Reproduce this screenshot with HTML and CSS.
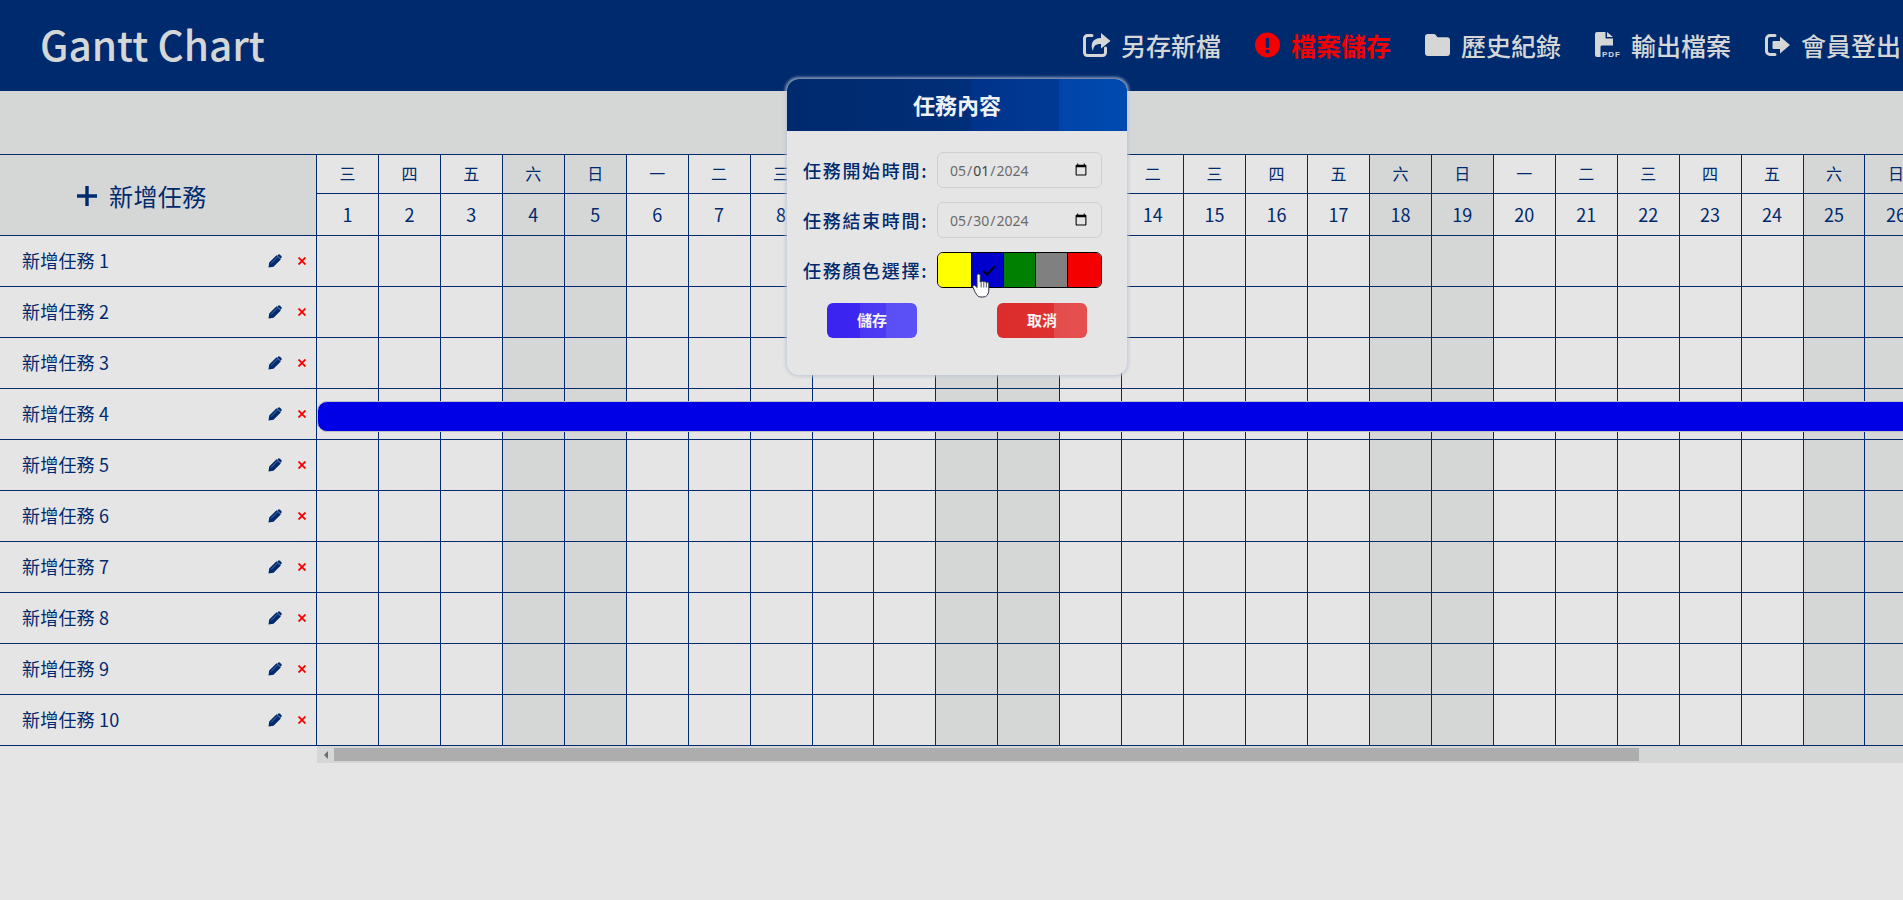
FILE: index.html
```html
<!DOCTYPE html>
<html lang="zh-Hant">
<head>
<meta charset="utf-8">
<title>Gantt Chart</title>
<link rel="stylesheet" href="styles.css">
</head>
<body>
<header class="topbar">
  <h1 class="brand">Gantt Chart</h1>
  <nav class="nav">
    <a class="nav-item"><svg class="nav-icon" viewBox="0 0 28 26"><path class="ico-line" d="M9 3.5H4.5a3 3 0 0 0-3 3v14a3 3 0 0 0 3 3h15a3 3 0 0 0 3-3V16"/><path class="ico-fill" d="M18 1l9.5 8L18 16.500V12c-5 0-7.500 1-8 7-3-6-1-13 8-13z"/></svg><span>另存新檔</span></a>
    <a class="nav-item nav-alert"><svg class="nav-icon" viewBox="-2 0 28 26"><circle cx="12.500" cy="13" r="12.500" fill="#f40000"/><rect x="10.800" y="5.500" width="3.400" height="10.500" rx="1.500" fill="#002a6e"/><circle cx="12.500" cy="19.500" r="2" fill="#002a6e"/></svg><span>檔案儲存</span></a>
    <a class="nav-item"><svg class="nav-icon" viewBox="-2 0 28 26"><path class="ico-fill" d="M3 2h6a2 2 0 0 1 1.600.8L12.500 5.200H22a3 3 0 0 1 3 3V21a3 3 0 0 1-3 3H3a3 3 0 0 1-3-3V5a3 3 0 0 1 3-3z"/></svg><span>歷史紀錄</span></a>
    <a class="nav-item"><svg class="nav-icon" viewBox="-2 0 28 26"><path class="ico-fill" d="M2 0h8.500v6.500H18v7H7a1.500 1.500 0 0 0-1.500 1.500v10H2a2 2 0 0 1-2-2V2a2 2 0 0 1 2-2zM12 0l6 5h-6z"/><text class="pdf-text" x="7" y="24.500" textLength="18">PDF</text></svg><span>輸出檔案</span></a>
    <a class="nav-item"><svg class="nav-icon" viewBox="-2 0 28 26"><path class="ico-line" d="M10 3.500H5A3.500 3.500 0 0 0 1.500 7v12A3.500 3.500 0 0 0 5 22.500h5"/><path class="ico-fill" d="M8.500 9H15V4.500L25 13l-10 8.500V17H8.500a1 1 0 0 1-1-1v-6a1 1 0 0 1 1-1z"/></svg><span>會員登出</span></a>
  </nav>
</header>

<div class="band"></div>

<main class="gantt">
  <div class="row row-head">
    <div class="add-task"><svg class="plus" viewBox="0 0 20 20"><path d="M10 0v20M0 10h20"/></svg><span>新增任務</span></div>
    <div class="day"><div class="wd">三</div><div class="dn">1</div></div>
    <div class="day"><div class="wd">四</div><div class="dn">2</div></div>
    <div class="day"><div class="wd">五</div><div class="dn">3</div></div>
    <div class="day off"><div class="wd">六</div><div class="dn">4</div></div>
    <div class="day off"><div class="wd">日</div><div class="dn">5</div></div>
    <div class="day"><div class="wd">一</div><div class="dn">6</div></div>
    <div class="day"><div class="wd">二</div><div class="dn">7</div></div>
    <div class="day"><div class="wd">三</div><div class="dn">8</div></div>
    <div class="day"><div class="wd">四</div><div class="dn">9</div></div>
    <div class="day"><div class="wd">五</div><div class="dn">10</div></div>
    <div class="day off"><div class="wd">六</div><div class="dn">11</div></div>
    <div class="day off"><div class="wd">日</div><div class="dn">12</div></div>
    <div class="day"><div class="wd">一</div><div class="dn">13</div></div>
    <div class="day"><div class="wd">二</div><div class="dn">14</div></div>
    <div class="day"><div class="wd">三</div><div class="dn">15</div></div>
    <div class="day"><div class="wd">四</div><div class="dn">16</div></div>
    <div class="day"><div class="wd">五</div><div class="dn">17</div></div>
    <div class="day off"><div class="wd">六</div><div class="dn">18</div></div>
    <div class="day off"><div class="wd">日</div><div class="dn">19</div></div>
    <div class="day"><div class="wd">一</div><div class="dn">20</div></div>
    <div class="day"><div class="wd">二</div><div class="dn">21</div></div>
    <div class="day"><div class="wd">三</div><div class="dn">22</div></div>
    <div class="day"><div class="wd">四</div><div class="dn">23</div></div>
    <div class="day"><div class="wd">五</div><div class="dn">24</div></div>
    <div class="day off"><div class="wd">六</div><div class="dn">25</div></div>
    <div class="day off"><div class="wd">日</div><div class="dn">26</div></div>
  </div>

  <div class="row"><div class="name"><span>新增任務 1</span><svg class="pencil" viewBox="0 0 14 14"><path d="M.5 13.500l.7-5 7.300-7.300 4.300 4.300-7.300 7.300zM10 .7a1.500 1.500 0 0 1 2 0L13.300 2a1.500 1.500 0 0 1 0 2l-.7.7L9.300 1.400z"/><path class="pencil-line" d="M3 9.500L9.500 3"/></svg><svg class="cross" viewBox="0 0 8 8"><path d="M.5.500l7 7M7.500.500l-7 7"/></svg></div><i class="c"></i><i class="c"></i><i class="c"></i><i class="c o"></i><i class="c o"></i><i class="c"></i><i class="c"></i><i class="c"></i><i class="c"></i><i class="c"></i><i class="c o"></i><i class="c o"></i><i class="c"></i><i class="c"></i><i class="c"></i><i class="c"></i><i class="c"></i><i class="c o"></i><i class="c o"></i><i class="c"></i><i class="c"></i><i class="c"></i><i class="c"></i><i class="c"></i><i class="c o"></i><i class="c o"></i></div>
  <div class="row"><div class="name"><span>新增任務 2</span><svg class="pencil" viewBox="0 0 14 14"><path d="M.5 13.500l.7-5 7.300-7.300 4.300 4.300-7.300 7.300zM10 .7a1.500 1.500 0 0 1 2 0L13.300 2a1.500 1.500 0 0 1 0 2l-.7.7L9.300 1.400z"/><path class="pencil-line" d="M3 9.500L9.500 3"/></svg><svg class="cross" viewBox="0 0 8 8"><path d="M.5.500l7 7M7.500.500l-7 7"/></svg></div><i class="c"></i><i class="c"></i><i class="c"></i><i class="c o"></i><i class="c o"></i><i class="c"></i><i class="c"></i><i class="c"></i><i class="c"></i><i class="c"></i><i class="c o"></i><i class="c o"></i><i class="c"></i><i class="c"></i><i class="c"></i><i class="c"></i><i class="c"></i><i class="c o"></i><i class="c o"></i><i class="c"></i><i class="c"></i><i class="c"></i><i class="c"></i><i class="c"></i><i class="c o"></i><i class="c o"></i></div>
  <div class="row"><div class="name"><span>新增任務 3</span><svg class="pencil" viewBox="0 0 14 14"><path d="M.5 13.500l.7-5 7.300-7.300 4.300 4.300-7.300 7.300zM10 .7a1.500 1.500 0 0 1 2 0L13.300 2a1.500 1.500 0 0 1 0 2l-.7.7L9.300 1.400z"/><path class="pencil-line" d="M3 9.500L9.500 3"/></svg><svg class="cross" viewBox="0 0 8 8"><path d="M.5.500l7 7M7.500.500l-7 7"/></svg></div><i class="c"></i><i class="c"></i><i class="c"></i><i class="c o"></i><i class="c o"></i><i class="c"></i><i class="c"></i><i class="c"></i><i class="c"></i><i class="c"></i><i class="c o"></i><i class="c o"></i><i class="c"></i><i class="c"></i><i class="c"></i><i class="c"></i><i class="c"></i><i class="c o"></i><i class="c o"></i><i class="c"></i><i class="c"></i><i class="c"></i><i class="c"></i><i class="c"></i><i class="c o"></i><i class="c o"></i></div>
  <div class="row row-task"><div class="name"><span>新增任務 4</span><svg class="pencil" viewBox="0 0 14 14"><path d="M.5 13.500l.7-5 7.300-7.300 4.300 4.300-7.300 7.300zM10 .7a1.500 1.500 0 0 1 2 0L13.300 2a1.500 1.500 0 0 1 0 2l-.7.7L9.300 1.400z"/><path class="pencil-line" d="M3 9.500L9.500 3"/></svg><svg class="cross" viewBox="0 0 8 8"><path d="M.5.500l7 7M7.500.500l-7 7"/></svg></div><i class="c"></i><i class="c"></i><i class="c"></i><i class="c o"></i><i class="c o"></i><i class="c"></i><i class="c"></i><i class="c"></i><i class="c"></i><i class="c"></i><i class="c o"></i><i class="c o"></i><i class="c"></i><i class="c"></i><i class="c"></i><i class="c"></i><i class="c"></i><i class="c o"></i><i class="c o"></i><i class="c"></i><i class="c"></i><i class="c"></i><i class="c"></i><i class="c"></i><i class="c o"></i><i class="c o"></i><div class="task-bar"></div></div>
  <div class="row"><div class="name"><span>新增任務 5</span><svg class="pencil" viewBox="0 0 14 14"><path d="M.5 13.500l.7-5 7.300-7.300 4.300 4.300-7.300 7.300zM10 .7a1.500 1.500 0 0 1 2 0L13.300 2a1.500 1.500 0 0 1 0 2l-.7.7L9.300 1.400z"/><path class="pencil-line" d="M3 9.500L9.500 3"/></svg><svg class="cross" viewBox="0 0 8 8"><path d="M.5.500l7 7M7.500.500l-7 7"/></svg></div><i class="c"></i><i class="c"></i><i class="c"></i><i class="c o"></i><i class="c o"></i><i class="c"></i><i class="c"></i><i class="c"></i><i class="c"></i><i class="c"></i><i class="c o"></i><i class="c o"></i><i class="c"></i><i class="c"></i><i class="c"></i><i class="c"></i><i class="c"></i><i class="c o"></i><i class="c o"></i><i class="c"></i><i class="c"></i><i class="c"></i><i class="c"></i><i class="c"></i><i class="c o"></i><i class="c o"></i></div>
  <div class="row"><div class="name"><span>新增任務 6</span><svg class="pencil" viewBox="0 0 14 14"><path d="M.5 13.500l.7-5 7.300-7.300 4.300 4.300-7.300 7.300zM10 .7a1.500 1.500 0 0 1 2 0L13.300 2a1.500 1.500 0 0 1 0 2l-.7.7L9.300 1.400z"/><path class="pencil-line" d="M3 9.500L9.500 3"/></svg><svg class="cross" viewBox="0 0 8 8"><path d="M.5.500l7 7M7.500.500l-7 7"/></svg></div><i class="c"></i><i class="c"></i><i class="c"></i><i class="c o"></i><i class="c o"></i><i class="c"></i><i class="c"></i><i class="c"></i><i class="c"></i><i class="c"></i><i class="c o"></i><i class="c o"></i><i class="c"></i><i class="c"></i><i class="c"></i><i class="c"></i><i class="c"></i><i class="c o"></i><i class="c o"></i><i class="c"></i><i class="c"></i><i class="c"></i><i class="c"></i><i class="c"></i><i class="c o"></i><i class="c o"></i></div>
  <div class="row"><div class="name"><span>新增任務 7</span><svg class="pencil" viewBox="0 0 14 14"><path d="M.5 13.500l.7-5 7.300-7.300 4.300 4.300-7.300 7.300zM10 .7a1.500 1.500 0 0 1 2 0L13.300 2a1.500 1.500 0 0 1 0 2l-.7.7L9.300 1.400z"/><path class="pencil-line" d="M3 9.500L9.500 3"/></svg><svg class="cross" viewBox="0 0 8 8"><path d="M.5.500l7 7M7.500.500l-7 7"/></svg></div><i class="c"></i><i class="c"></i><i class="c"></i><i class="c o"></i><i class="c o"></i><i class="c"></i><i class="c"></i><i class="c"></i><i class="c"></i><i class="c"></i><i class="c o"></i><i class="c o"></i><i class="c"></i><i class="c"></i><i class="c"></i><i class="c"></i><i class="c"></i><i class="c o"></i><i class="c o"></i><i class="c"></i><i class="c"></i><i class="c"></i><i class="c"></i><i class="c"></i><i class="c o"></i><i class="c o"></i></div>
  <div class="row"><div class="name"><span>新增任務 8</span><svg class="pencil" viewBox="0 0 14 14"><path d="M.5 13.500l.7-5 7.300-7.300 4.300 4.300-7.300 7.300zM10 .7a1.500 1.500 0 0 1 2 0L13.300 2a1.500 1.500 0 0 1 0 2l-.7.7L9.300 1.400z"/><path class="pencil-line" d="M3 9.500L9.500 3"/></svg><svg class="cross" viewBox="0 0 8 8"><path d="M.5.500l7 7M7.500.500l-7 7"/></svg></div><i class="c"></i><i class="c"></i><i class="c"></i><i class="c o"></i><i class="c o"></i><i class="c"></i><i class="c"></i><i class="c"></i><i class="c"></i><i class="c"></i><i class="c o"></i><i class="c o"></i><i class="c"></i><i class="c"></i><i class="c"></i><i class="c"></i><i class="c"></i><i class="c o"></i><i class="c o"></i><i class="c"></i><i class="c"></i><i class="c"></i><i class="c"></i><i class="c"></i><i class="c o"></i><i class="c o"></i></div>
  <div class="row"><div class="name"><span>新增任務 9</span><svg class="pencil" viewBox="0 0 14 14"><path d="M.5 13.500l.7-5 7.300-7.300 4.300 4.300-7.300 7.300zM10 .7a1.500 1.500 0 0 1 2 0L13.300 2a1.500 1.500 0 0 1 0 2l-.7.7L9.300 1.400z"/><path class="pencil-line" d="M3 9.500L9.500 3"/></svg><svg class="cross" viewBox="0 0 8 8"><path d="M.5.500l7 7M7.500.500l-7 7"/></svg></div><i class="c"></i><i class="c"></i><i class="c"></i><i class="c o"></i><i class="c o"></i><i class="c"></i><i class="c"></i><i class="c"></i><i class="c"></i><i class="c"></i><i class="c o"></i><i class="c o"></i><i class="c"></i><i class="c"></i><i class="c"></i><i class="c"></i><i class="c"></i><i class="c o"></i><i class="c o"></i><i class="c"></i><i class="c"></i><i class="c"></i><i class="c"></i><i class="c"></i><i class="c o"></i><i class="c o"></i></div>
  <div class="row"><div class="name"><span>新增任務 10</span><svg class="pencil" viewBox="0 0 14 14"><path d="M.5 13.500l.7-5 7.300-7.300 4.300 4.300-7.300 7.300zM10 .7a1.500 1.500 0 0 1 2 0L13.300 2a1.500 1.500 0 0 1 0 2l-.7.7L9.300 1.400z"/><path class="pencil-line" d="M3 9.500L9.500 3"/></svg><svg class="cross" viewBox="0 0 8 8"><path d="M.5.500l7 7M7.500.500l-7 7"/></svg></div><i class="c"></i><i class="c"></i><i class="c"></i><i class="c o"></i><i class="c o"></i><i class="c"></i><i class="c"></i><i class="c"></i><i class="c"></i><i class="c"></i><i class="c o"></i><i class="c o"></i><i class="c"></i><i class="c"></i><i class="c"></i><i class="c"></i><i class="c"></i><i class="c o"></i><i class="c o"></i><i class="c"></i><i class="c"></i><i class="c"></i><i class="c"></i><i class="c"></i><i class="c o"></i><i class="c o"></i></div>

  <div class="scrollbar">
    <div class="sb-arrow"></div>
    <div class="sb-thumb"></div>
  </div>
</main>

<section class="modal">
  <h2 class="modal-title">任務內容</h2>
  <form class="modal-form">
    <div class="field"><label class="field-label">任務開始時間:</label><input class="date-input date-day" type="date" value="2024-05-01"></div>
    <div class="field"><label class="field-label">任務結束時間:</label><input class="date-input" type="date" value="2024-05-30"></div>
    <div class="field"><label class="field-label">任務顏色選擇:</label>
      <div class="palette">
        <div class="swatch sw-yellow"></div>
        <div class="swatch sw-blue"><svg class="check" viewBox="0 0 14 11"><path d="M1 6l4 3.500L13 1"/></svg></div>
        <div class="swatch sw-green"></div>
        <div class="swatch sw-gray"></div>
        <div class="swatch sw-red"></div>
        <svg class="hand" viewBox="0 0 18 25"><path d="M5 2.500a1.600 1.600 0 0 1 3.200 0V9l1 .1V9a1.400 1.400 0 0 1 2.600.3 1.400 1.400 0 0 1 2.600.6 1.300 1.300 0 0 1 2.400.8V17c0 4-2 7-6 7h-2c-3 0-4-2-5.500-4.500L1 14.500c-.8-1.600 1-3 2.300-1.800L5 14.500z"/><path d="M9.200 9.500v5M11.800 9.500v5M14.400 10v4.500"/></svg>
      </div>
    </div>
    <div class="actions">
      <button class="btn btn-save" type="button">儲存</button>
      <button class="btn btn-cancel" type="button">取消</button>
    </div>
  </form>
</section>
</body>
</html>
```

FILE: styles.css
```css
* { box-sizing: border-box; }

html, body {
  margin: 0;
  height: 100%;
  overflow: hidden;
}

body {
  background: #e5e5e5;
  color: #002a6e;
  font-family: "Noto Sans CJK TC", "Noto Sans", sans-serif;
}

/* top bar */
.topbar {
  height: 91px;
  background: #002a6e;
  display: flex;
  align-items: center;
  padding: 0 2px 0 40px;
}

.brand {
  margin: 0 0 2px;
  font-size: 40.6px;
  line-height: 1;
  font-weight: 500;
  color: #d5d7d7;
}

.nav {
  margin-left: auto;
  display: flex;
  gap: 32px;
  margin-top: -2px;
}

.nav-item {
  display: flex;
  align-items: center;
  gap: 10px;
  font-size: 25px;
  line-height: 30px;
  font-weight: 500;
  color: #d5d7d7;
}

.nav-alert {
  color: #f40000;
  font-weight: 700;
}

.nav-icon {
  width: 28px;
  height: 26px;
  flex: none;
}

.ico-line {
  fill: none;
  stroke: #d5d7d7;
  stroke-width: 3;
  stroke-linecap: round;
}

.ico-fill { fill: #d5d7d7; }

.pdf-text {
  font: 700 8px "Liberation Sans", sans-serif;
  fill: #d5d7d7;
}

.band {
  height: 63px;
  background: #d5d7d7;
}

/* chart */
.gantt {
  border-top: 1px solid #002a6e;
  overflow: hidden;
}

.row {
  display: flex;
  height: 51px;
  position: relative;
}

.row-head { height: 81px; }

.add-task {
  flex: 0 0 317px;
  display: flex;
  align-items: center;
  gap: 12px;
  padding: 1px 0 0 77px;
  background: #d5d7d7;
  border-right: 1px solid #002a6e;
  border-bottom: 1px solid #002a6e;
  font-size: 24px;
  font-weight: 400;
  letter-spacing: .4px;
}

.plus {
  width: 20px;
  height: 20px;
  flex: none;
}

.plus path {
  fill: none;
  stroke: #002a6e;
  stroke-width: 3.400;
}

.day {
  flex: 0 0 61.94px;
  display: flex;
  flex-direction: column;
  border-right: 1px solid #002a6e;
  border-bottom: 1px solid #002a6e;
  text-align: center;
}

.off { background: #d5d7d7; }

.wd {
  height: 39px;
  line-height: 37px;
  font-size: 16px;
  border-bottom: 1px solid #002a6e;
}

.dn {
  flex: 1;
  line-height: 40px;
  font-size: 18px;
}

.name {
  flex: 0 0 317px;
  display: flex;
  align-items: center;
  padding: 0 10px 0 22px;
  border-right: 1px solid #002a6e;
  border-bottom: 1px solid #002a6e;
  font-size: 18px;
}

.name span {
  margin-right: auto;
  margin-top: -2px;
  letter-spacing: .2px;
}

.pencil {
  width: 14px;
  height: 14px;
  fill: #002a6e;
  margin-right: 16px;
}

.pencil-line {
  fill: none;
  stroke: #8ca2c4;
  stroke-width: .6;
}

.cross {
  width: 8px;
  height: 8px;
}

.cross path {
  fill: none;
  stroke: #f40000;
  stroke-width: 1.800;
}

.c {
  display: block;
  flex: 0 0 61.94px;
  border-right: 1px solid #002a6e;
  border-bottom: 1px solid #002a6e;
}

.o { background: #d5d7d7; }

.task-bar {
  position: absolute;
  left: 317px;
  top: 12px;
  width: 1700px;
  height: 31px;
  background: #0000e6;
  border: 1px solid #bdbdc4;
  border-radius: 10px;
}

/* horizontal scrollbar */
.scrollbar {
  margin-left: 317px;
  height: 17px;
  background: #d5d7d7;
  display: flex;
  align-items: center;
}

.sb-arrow {
  flex: 0 0 17px;
  height: 17px;
  display: flex;
  align-items: center;
  justify-content: center;
}

.sb-arrow::before {
  content: "";
  border-style: solid;
  border-width: 4px 4px 4px 0;
  border-color: transparent #6e6e6e transparent transparent;
}

.sb-thumb {
  width: 1305px;
  height: 13px;
  background: #adadad;
}

/* dialog */
.modal {
  position: absolute;
  left: 787px;
  top: 79px;
  width: 340px;
  background: #e5e5e5;
  border-radius: 12px;
  overflow: hidden;
  box-shadow: 0 0 3px 2px rgba(190, 198, 212, .7);
}

.modal-title {
  margin: 0;
  height: 52px;
  line-height: 50px;
  text-align: center;
  font-size: 22px;
  font-weight: 700;
  color: #eef2f7;
  background: linear-gradient(90deg, #002a6e 0%, #002e78 54%, #00338a 54%, #003a96 80%, #0044a8 80%, #004bb0 100%);
}

.modal-form {
  padding: 21px 25px 37px 16px;
  display: flex;
  flex-direction: column;
  gap: 14px;
}

.field {
  display: flex;
  align-items: center;
  height: 36px;
}

.field-label {
  flex: 0 0 134px;
  font-size: 18px;
  font-weight: 500;
  letter-spacing: 1.700px;
  white-space: nowrap;
}

.date-input {
  flex: 1;
  height: 36px;
  min-width: 0;
  padding: 0 11px;
  border: 1px solid #cfcfcf;
  border-radius: 6px;
  background: transparent;
  color: #6b6b6b;
  font: 14px "Noto Sans", sans-serif;
}

.date-day::-webkit-datetime-edit-day-field { color: #444; }

.palette {
  flex: 1;
  height: 36px;
  display: flex;
  position: relative;
  border: 1px solid #000;
  border-radius: 6px;
}

.swatch {
  flex: 0 0 32px;
  display: flex;
  align-items: center;
  justify-content: center;
  border-right: 1px solid #000;
}

.sw-yellow { background: #ff0; flex: 0 0 34px; border-radius: 5px 0 0 5px; }
.sw-blue { background: #0000cd; }
.sw-green { background: #008000; }
.sw-gray { background: #808080; }
.sw-red { background: #f40000; flex: 1; border-right: 0; border-radius: 0 5px 5px 0; }

.check {
  width: 14px;
  height: 11px;
  margin-left: 2px;
}

.check path {
  fill: none;
  stroke: #000022;
  stroke-width: 2.400;
}

.hand {
  position: absolute;
  left: 34px;
  top: 20px;
  width: 18px;
  height: 25px;
}

.hand path:first-child {
  fill: #fff;
  stroke: #2a2f45;
  stroke-width: 1;
}

.hand path:last-child {
  fill: none;
  stroke: #2a2f45;
  stroke-width: .8;
}

.actions {
  display: flex;
  justify-content: space-between;
  padding: 1px 15px 0 24px;
}

.btn {
  width: 90px;
  height: 35px;
  border: 0;
  border-radius: 6px;
  padding: 0 0 2px;
  color: #f4f4f4;
  font: 700 15px "Noto Sans CJK TC", sans-serif;
}

.btn-save { background: linear-gradient(90deg, #3a22f0 0%, #3d26f0 37%, #4a36f3 37%, #4e3cf3 66%, #5a4ff6 66%, #5c51f6 100%); }
.btn-cancel { background: linear-gradient(90deg, #dc2c2c 0%, #de3030 63%, #e44c4c 63%, #e5504f 100%); }
```
